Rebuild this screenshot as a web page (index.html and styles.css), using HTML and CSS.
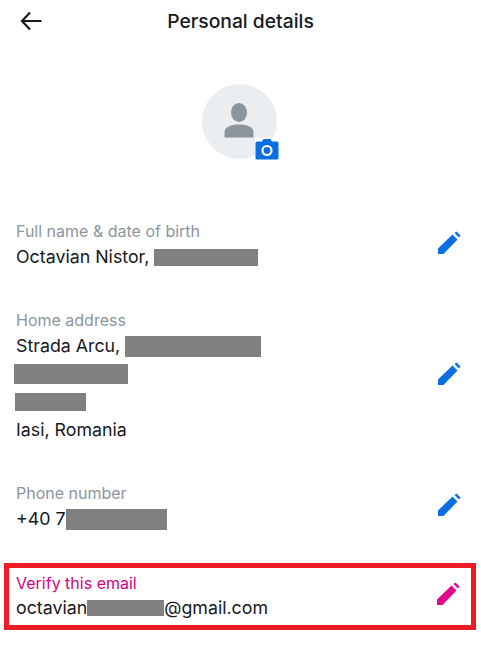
FILE: index.html
```html
<!DOCTYPE html>
<html lang="en">
<head>
  <meta charset="UTF-8" />
  <meta name="viewport" content="width=device-width, initial-scale=1.0" />
  <title>Personal details</title>
  <link rel="stylesheet" href="styles.css">
</head>
<body>
  <header class="topbar">
    <button class="back" aria-label="Back">
      <svg width="24" height="20" viewBox="0 0 24 20"><path d="M21.500 10H2M10 1.500 2 10l8 8.500" fill="none" stroke="#16191d" stroke-width="2.200"/></svg>
    </button>
    <h1>Personal details</h1>
  </header>

  <div class="avatar">
    <svg class="person" width="30" height="35" viewBox="0 0 30 35">
      <ellipse cx="15" cy="9.500" rx="8" ry="9.500" fill="#8b959e"/>
      <path d="M0.500 34.500V29C0.500 24 7 21.500 15 21.500S29.500 24 29.500 29V34.500Z" fill="#8b959e"/>
    </svg>
    <span class="camera">
      <svg width="24" height="22" viewBox="0 0 24 22">
        <path d="M2 3.500H7L8.500 1H15.500L17 3.500H22A1.500 1.500 0 0 1 23.500 5V20A1.500 1.500 0 0 1 22 21.500H2A1.500 1.500 0 0 1 .5 20V5A1.500 1.500 0 0 1 2 3.500Z" fill="#0a6fe0"/>
        <circle cx="12" cy="12.500" r="4.500" fill="none" stroke="#fff" stroke-width="2.200"/>
      </svg>
    </span>
  </div>

  <section class="details">
    <div class="row">
      <div class="info">
        <div class="label">Full name &amp; date of birth</div>
        <div class="value">Octavian Nistor, <span class="redact redact-name"></span></div>
      </div>
      <svg class="pencil" width="24" height="24" viewBox="0 0 24 24"><path d="M1 23V17.500L15.500 3.500 20.500 8.500 6.500 23ZM17.500 2 19.500 .5 23.500 4.500 22 6.500Z" fill="#0a6fe0"/></svg>
    </div>

    <div class="row">
      <div class="info">
        <div class="label">Home address</div>
        <div class="value">Strada Arcu, <span class="redact redact-street"></span></div>
        <div class="value"><span class="redact redact-line2"></span></div>
        <div class="value"><span class="redact redact-line3"></span></div>
        <div class="value">Iasi, Romania</div>
      </div>
      <svg class="pencil" width="24" height="24" viewBox="0 0 24 24"><path d="M1 23V17.500L15.500 3.500 20.500 8.500 6.500 23ZM17.500 2 19.500 .5 23.500 4.500 22 6.500Z" fill="#0a6fe0"/></svg>
    </div>

    <div class="row">
      <div class="info">
        <div class="label">Phone number</div>
        <div class="value">+40 7<span class="redact redact-phone"></span></div>
      </div>
      <svg class="pencil" width="24" height="24" viewBox="0 0 24 24"><path d="M1 23V17.500L15.500 3.500 20.500 8.500 6.500 23ZM17.500 2 19.500 .5 23.500 4.500 22 6.500Z" fill="#0a6fe0"/></svg>
    </div>

    <div class="row row-verify">
      <div class="info">
        <div class="label">Verify this email</div>
        <div class="value">octavian<span class="redact redact-email"></span>@gmail.com</div>
      </div>
      <svg class="pencil" width="24" height="24" viewBox="0 0 24 24"><path d="M1 23V17.500L15.500 3.500 20.500 8.500 6.500 23ZM17.500 2 19.500 .5 23.500 4.500 22 6.500Z" fill="#e0088f"/></svg>
    </div>
  </section>
</body>
</html>
```

FILE: styles.css
```css
* {
  margin: 0;
  padding: 0;
  box-sizing: border-box;
  font-family: 'Inter', 'Liberation Sans', sans-serif;
}

body {
  background: #fff;
  color: #16191d;
  width: 481px;
  height: 649px;
  overflow: hidden;
}

.topbar {
  height: 42px;
  display: flex;
  align-items: center;
  justify-content: center;
  position: relative;
}

.topbar h1 {
  font-size: 19.300px;
  font-weight: 500;
  margin-top: -1px;
}

.back {
  position: absolute;
  left: 20px;
  top: 11px;
  border: none;
  background: none;
  display: flex;
}

.avatar {
  width: 75px;
  height: 75px;
  margin: 42px 0 0 202px;
  border-radius: 50%;
  background: #ebeef1;
  display: flex;
  align-items: center;
  justify-content: center;
  position: relative;
}

.person {
  margin-bottom: 3px;
  margin-left: -2px;
}

.camera {
  position: absolute;
  left: 53px;
  top: 54px;
  display: flex;
  background: #fff;
  border-radius: 3px;
}

.details {
  margin-top: 61px;
  display: flex;
  flex-direction: column;
  gap: 38px;
}

.row {
  display: flex;
  align-items: center;
  justify-content: space-between;
  padding: 0 20px 0 16px;
}

.label {
  font-size: 16px;
  line-height: 20px;
  color: #8b959e;
  padding-top: 1px;
  margin-bottom: -1px;
}

.value {
  font-size: 17.800px;
  line-height: 28px;
  height: 28px;
  margin-top: 3px;
  display: flex;
  align-items: center;
  white-space: pre;
}

.value + .value {
  margin-top: 0;
}

.pencil {
  margin-top: -6px;
}

.row-verify {
  margin: -8px 5px 0 4px;
  height: 67px;
  border: 5px solid #ee1c25;
  padding: 0 11px 0 7px;
}

.row-verify .label {
  color: #d1047f;
}

.row-verify .value {
  margin-top: 2px;
}

.redact {
  display: inline-block;
  background: #808080;
}

.redact-name {
  width: 104px;
  height: 17px;
}

.redact-street {
  width: 136px;
  height: 21px;
}

.redact-line2 {
  width: 114px;
  height: 20px;
  margin-left: -2px;
}

.redact-line3 {
  width: 71px;
  height: 18px;
  margin-left: -1px;
}

.redact-phone {
  width: 101px;
  height: 21px;
}

.redact-email {
  width: 77px;
  height: 16px;
}
```
